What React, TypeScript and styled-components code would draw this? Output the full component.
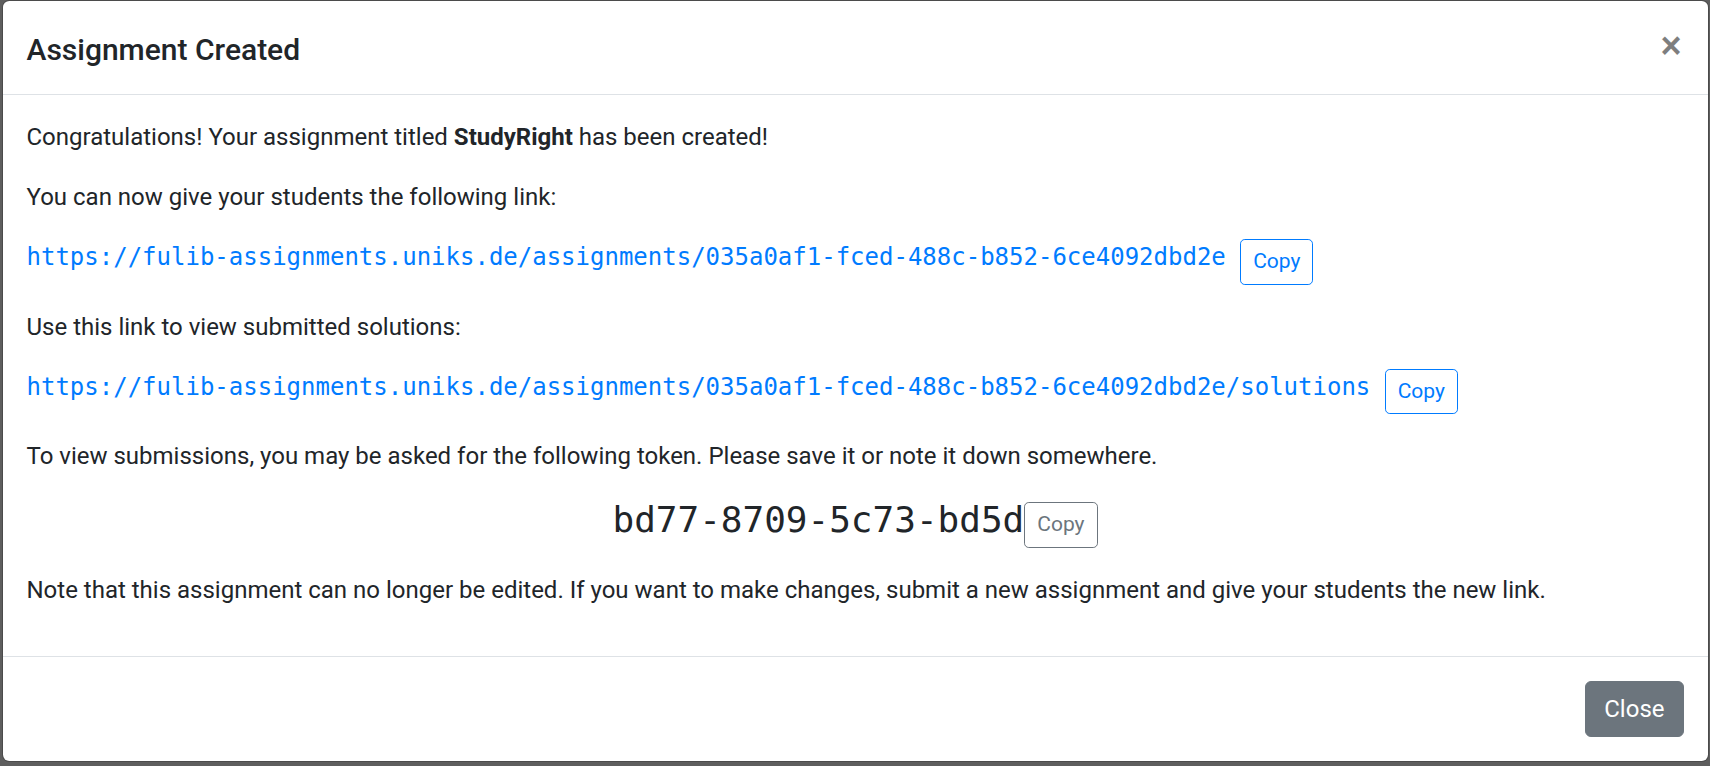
import React from 'react';
import styled, { createGlobalStyle } from 'styled-components';

const GlobalStyle = createGlobalStyle`
	html,
	body {
		margin: 0;
		height: 100%;
		overflow: hidden;
		background: #5e5e5e;
	}

	body {
		font-family: Roboto, Inter, 'Liberation Sans', sans-serif;
		color: #212529;
	}

	* {
		box-sizing: border-box;
	}
`;

const token = 'bd77-8709-5c73-bd5d';
const assignmentLink = 'https://fulib-assignments.uniks.de/assignments/035a0af1-fced-488c-b852-6ce4092dbd2e';

function App() {
	return (
		<>
			<GlobalStyle />
			<Backdrop>
				<ModalContent>
					<ModalHeader>
						<ModalTitle>Assignment Created</ModalTitle>
						<DismissButton aria-label="Close">×</DismissButton>
					</ModalHeader>
					<ModalBody>
						<Paragraph>
							Congratulations! Your assignment titled <strong>StudyRight</strong> has been created!
						</Paragraph>
						<Paragraph>You can now give your students the following link:</Paragraph>
						<LinkRow>
							<MonoLink href="#">{assignmentLink}</MonoLink>
							<CopyButton variant="primary">Copy</CopyButton>
						</LinkRow>
						<Paragraph>Use this link to view submitted solutions:</Paragraph>
						<LinkRow>
							<MonoLink href="#">{assignmentLink}/solutions</MonoLink>
							<CopyButton variant="primary">Copy</CopyButton>
						</LinkRow>
						<Paragraph>
							To view submissions, you may be asked for the following token. Please save it or note it down
							somewhere.
						</Paragraph>
						<TokenRow>
							<Token>{token}</Token>
							<TokenCopy variant="secondary">Copy</TokenCopy>
						</TokenRow>
						<Paragraph>
							Note that this assignment can no longer be edited. If you want to make changes, submit a new
							assignment and give your students the new link.
						</Paragraph>
					</ModalBody>
					<ModalFooter>
						<CloseButton>Close</CloseButton>
					</ModalFooter>
				</ModalContent>
			</Backdrop>
		</>
	);
}

const Backdrop = styled.div`
	display: flex;
	padding: 0 1.5px 0 1.5px;
`;

const ModalContent = styled.div`
	width: 100%;
	display: flex;
	flex-direction: column;
	background: #fff;
	background-clip: padding-box;
	border: 1.5px solid rgba(0, 0, 0, 0.2);
	border-radius: 7.2px;
`;

const ModalHeader = styled.div`
	display: flex;
	align-items: flex-start;
	padding: 26px 24px 22px;
	border-bottom: 1.5px solid #dee2e6;
`;

const ModalTitle = styled.h5`
	margin: 0;
	font-size: 30px;
	line-height: 45px;
	font-weight: 500;
	color: #212529;
`;

const DismissButton = styled.button`
	margin: -26px -24px -22px auto;
	padding: 27px 26px 21px 22px;
	border: 0;
	background: transparent;
	font-family: 'Liberation Sans', Arial, sans-serif;
	font-size: 36px;
	font-weight: 700;
	line-height: 1;
	color: #000;
	opacity: 0.5;
	text-shadow: 0 1.5px 0 #fff;
	cursor: pointer;
`;

const ModalBody = styled.div`
	padding: 24px;
`;

const Paragraph = styled.p`
	margin: 0 0 24px;
	font-size: 24px;
	line-height: 36px;

	strong {
		font-weight: 700;
	}
`;

const LinkRow = styled.div`
	display: flex;
	align-items: flex-start;
	margin-bottom: 24px;
`;

const MonoLink = styled.a`
	margin-right: 14.4px;
	font-family: 'DejaVu Sans Mono', 'Liberation Mono', monospace;
	font-size: 24px;
	line-height: 36px;
	color: #007bff;
	text-decoration: none;
`;

const CopyButton = styled.button<{ variant: 'primary' | 'secondary' }>`
	padding: 6px 12px;
	font-family: Roboto, Inter, sans-serif;
	font-size: 21px;
	line-height: 31.5px;
	background: transparent;
	color: ${(props) => (props.variant === 'primary' ? '#007bff' : '#6c757d')};
	border: 1.5px solid ${(props) => (props.variant === 'primary' ? '#007bff' : '#6c757d')};
	border-radius: 4.8px;
	cursor: pointer;
`;

const TokenRow = styled.div`
	display: flex;
	justify-content: center;
	align-items: flex-start;
	margin-bottom: 24px;
`;

const Token = styled.span`
	font-family: 'DejaVu Sans Mono', 'Liberation Mono', monospace;
	font-size: 36px;
	line-height: 43.2px;
	color: #212529;
`;

const TokenCopy = styled(CopyButton)`
	margin-top: 4.3px;
`;

const ModalFooter = styled.div`
	display: flex;
	justify-content: flex-end;
	align-items: center;
	padding: 18px;
	border-top: 1.5px solid #dee2e6;
`;

const CloseButton = styled.button`
	margin: 6px;
	padding: 9px 18px;
	font-family: Roboto, Inter, sans-serif;
	font-size: 24px;
	line-height: 36px;
	color: #fff;
	background: #6c757d;
	border: 1.5px solid #6c757d;
	border-radius: 6px;
	cursor: pointer;
`;

export default App;
